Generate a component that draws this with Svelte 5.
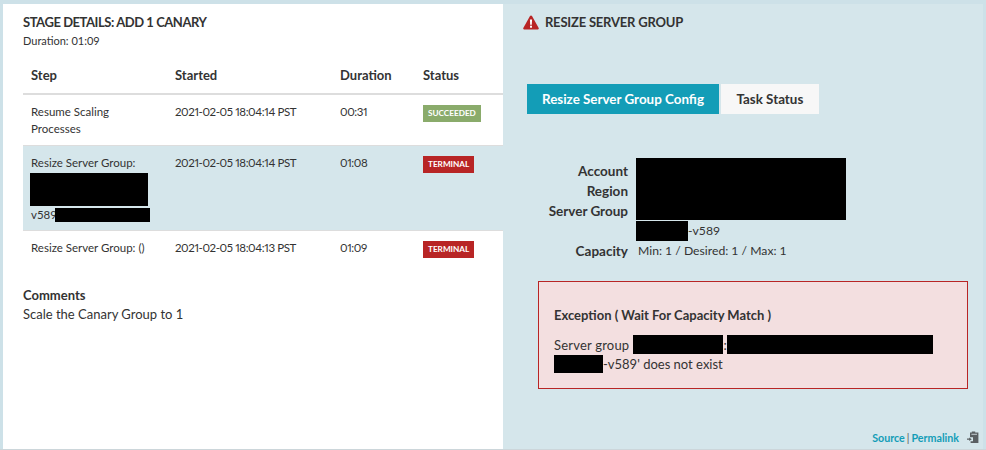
<script>
  const steps = [
    { name: "Resume Scaling Processes", started: "2021-02-05 18:04:14 PST", duration: "00:31", status: "SUCCEEDED" },
    { name: "Resize Server Group:", started: "2021-02-05 18:04:14 PST", duration: "01:08", status: "TERMINAL", redacted: true },
    { name: "Resize Server Group: ()", started: "2021-02-05 18:04:13 PST", duration: "01:09", status: "TERMINAL" }
  ];
</script>

<main class="page">
  <section class="left">
    <h4 class="title stage-title">STAGE DETAILS: ADD 1 CANARY</h4>
    <div class="stage-duration">Duration: 01:09</div>

    <table class="steps">
      <colgroup>
        <col class="col-step" />
        <col class="col-started" />
        <col class="col-duration" />
        <col class="col-status" />
      </colgroup>
      <thead>
        <tr>
          <th>Step</th>
          <th>Started</th>
          <th>Duration</th>
          <th>Status</th>
        </tr>
      </thead>
      <tbody>
        {#each steps as step}
          <tr class:active={step.redacted}>
            <td>
              <div class="step-name">{step.name}</div>
              {#if step.redacted}
                <div class="redact r-step1"></div>
                <div class="version">v589<span class="redact r-step2"></span></div>
              {/if}
            </td>
            <td class="num">{step.started}</td>
            <td class="num">{step.duration}</td>
            <td>
              <span class="badge" class:ok={step.status === "SUCCEEDED"}>{step.status}</span>
            </td>
          </tr>
        {/each}
      </tbody>
    </table>

    <div class="comments">
      <h5>Comments</h5>
      <p>Scale the Canary Group to 1</p>
    </div>
  </section>

  <section class="right">
    <h4 class="title right-title">
      <svg class="warn" viewBox="0 0 16 15" width="16" height="15">
        <path d="M8 0.5 Q8.7 0.5 9 1.1 L15.7 13 Q16.1 14.2 15 14.5 L1 14.5 Q-0.1 14.2 0.3 13 L7 1.1 Q7.3 0.5 8 0.5 Z" fill="#b82525" />
        <path d="M6.9 4.4 H9.1 L8.8 9.8 H7.2 Z" fill="#fff" />
        <rect x="7" y="10.7" width="2" height="2" fill="#fff" />
      </svg>
      RESIZE SERVER GROUP
    </h4>

    <div class="tabs">
      <button class="tab selected">Resize Server Group Config</button>
      <button class="tab">Task Status</button>
    </div>

    <div class="details">
      <div class="label l1">Account</div>
      <div class="label l2">Region</div>
      <div class="label l3">Server Group</div>
      <div class="redact r-account"></div>
      <div class="value group"><span class="redact r-group"></span>-v589</div>
      <div class="label l5">Capacity</div>
      <div class="value capacity">Min: 1 / Desired: 1 / Max: 1</div>
    </div>

    <div class="alert">
      <h5>Exception ( Wait For Capacity Match )</h5>
      <div class="line"><span class="lead">Server group</span><span class="redact r-e1"></span><span class="colon">:</span><span class="redact r-e2"></span></div>
      <div class="line"><span class="redact r-e3"></span><span>-v589' does not exist</span></div>
    </div>

    <footer class="links">
      <a href="#source">Source</a><span class="sep">|</span><a href="#permalink">Permalink</a>
      <svg class="clip" viewBox="0 0 12 12" width="12" height="12">
        <path d="M3 1.6 H4.8 V0.4 H8.2 V1.6 H11.4 V12 H3.6 V10.2 H6 V6.2 H3 Z" fill="#5a5f62" />
        <rect x="4.4" y="2.8" width="5.6" height="1" fill="#c4cdd0" />
        <path d="M0 7.6 H2.2 V6.4 L4.8 8.2 L2.2 10 V8.8 H0 Z" fill="#5a5f62" />
      </svg>
    </footer>
  </section>
</main>

<style>
  :global(body) {
    margin: 0;
    background: #cde1e8;
  }

  .page {
    box-sizing: border-box;
    width: 986px;
    height: 450px;
    padding: 4px 3px 0 3px;
    display: flex;
    font-family: "Lato", "Noto Sans", sans-serif;
    color: #333;
    overflow: hidden;
    border-bottom: 1px solid #ccd6da;
  }

  .left {
    box-sizing: border-box;
    width: 500px;
    height: 445px;
    padding: 11px 0 0 20px;
    background: #fff;
  }

  .right {
    box-sizing: border-box;
    flex: 1;
    height: 445px;
    padding: 11px 0 0 20px;
    display: flex;
    flex-direction: column;
    background: #d5e6eb;
  }

  .title {
    margin: 0;
    font-size: 13px;
    line-height: 15px;
    font-weight: 700;
    height: 15px;
    letter-spacing: -0.2px;
  }

  .stage-title { letter-spacing: -0.45px; }

  .stage-duration {
    margin-top: 4px;
    font-size: 11px;
    line-height: 14px;
  }

  .steps {
    margin-top: 12px;
    width: 480px;
    border-collapse: collapse;
    table-layout: fixed;
    font-size: 11.5px;
    line-height: 17px;
  }

  .col-step { width: 144px; }
  .col-started { width: 165px; }
  .col-duration { width: 83px; }
  .col-status { width: 88px; }

  .steps th {
    text-align: left;
    font-size: 13px;
    line-height: 18px;
    font-weight: 700;
    padding: 6px 8px 9px;
    border-bottom: 2px solid #ddd;
  }

  .steps td {
    vertical-align: top;
    padding: 8px 8px;
    border-bottom: 1px solid #ddd;
  }

  .steps tr:last-child td { border-bottom: none; }

  .num {
    font-variant-numeric: proportional-nums;
    letter-spacing: -0.4px;
  }

  .active td { background: #d5e6eb; }

  .badge {
    display: block;
    width: fit-content;
    margin-top: 2px;
    height: 17px;
    padding: 0 5px;
    font-size: 8.2px;
    line-height: 17px;
    font-weight: 700;
    color: #fff;
    background: #b82525;
  }

  .badge.ok { background: #8aab6b; }

  .redact {
    display: block;
    background: #000;
  }

  .r-step1 {
    width: 118px;
    height: 33px;
    margin: 2px 0 0 -1px;
  }

  .version {
    display: flex;
    align-items: center;
    height: 15px;
    margin-top: 1px;
  }

  .r-step2 {
    width: 95px;
    height: 14px;
    margin-left: -2px;
  }

  .comments { margin-top: 19px; }

  .comments h5 {
    margin: 0;
    font-size: 13px;
    line-height: 20px;
    font-weight: 700;
  }

  .comments p {
    margin: -1px 0 0;
    font-size: 13px;
    line-height: 20px;
  }

  .warn { margin: 0 3px 0 0; vertical-align: -3px; }

  .tabs {
    display: flex;
    gap: 2px;
    margin: 54px 0 0 4px;
  }

  .tab {
    height: 30px;
    border: none;
    padding: 0 15px;
    font-family: inherit;
    font-size: 13.4px;
    font-weight: 700;
    color: #333;
    background: #f7f7f7;
  }

  .tab + .tab { padding: 0 15.5px; }

  .tab.selected {
    color: #fff;
    background: #139db7;
  }

  .details {
    display: grid;
    grid-template-columns: 105px 210px;
    grid-auto-rows: 20px;
    column-gap: 8px;
    margin-top: 47px;
    font-size: 12.2px;
    line-height: 20px;
  }

  .label {
    grid-column: 1;
    text-align: right;
    font-weight: 700;
    font-size: 13.5px;
  }

  .details .l1 { grid-row: 1; }
  .details .l2 { grid-row: 2; }
  .details .l3 { grid-row: 3; }
  .details .l5 { grid-row: 5; }

  .r-account {
    grid-area: 1 / 2 / 4 / 3;
    height: 62px;
    margin-top: -3px;
  }

  .group {
    grid-area: 4 / 2;
    display: flex;
    align-items: center;
  }

  .r-group { width: 52px; height: 20px; }

  .capacity {
    grid-area: 5 / 2;
    padding-left: 2px;
  }

  .alert {
    box-sizing: border-box;
    width: 430px;
    height: 108px;
    margin: 20px 0 0 15px;
    padding: 24px 15px 0;
    border: 1px solid #b82525;
    background: #f3dfe0;
    font-size: 13px;
    line-height: 20px;
  }

  .alert h5 {
    margin: 0 0 11px;
    font-size: 13px;
    line-height: 18px;
    font-weight: 700;
  }

  .line {
    display: flex;
    align-items: center;
    height: 19px;
  }

  .lead {
    width: 73px;
    letter-spacing: 0.2px;
    white-space: nowrap;
  }

  .r-e1 { width: 90px; height: 19px; margin-left: 6px; }
  .colon { width: 4px; text-align: center; }
  .r-e2 { width: 206px; height: 19px; }
  .r-e3 { width: 49px; height: 18px; }

  .links {
    margin-top: auto;
    display: flex;
    align-items: center;
    justify-content: flex-end;
    height: 24px;
    font-size: 10.7px;
    font-weight: 700;
  }

  .links a {
    color: #139db7;
    text-decoration: none;
  }

  .sep {
    margin: 0 2px;
    font-weight: 400;
    color: #555;
  }

  .clip { margin: 0 4px 0 8px; }
</style>
